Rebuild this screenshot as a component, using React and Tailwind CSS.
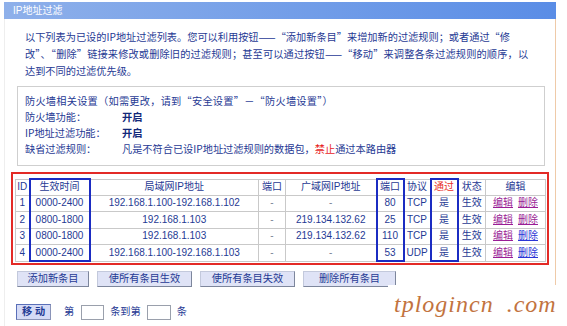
const rows = [
  { id: 1, time: '0000-2400', lan: '192.168.1.100-192.168.1.102', wan: '-', port: '80', proto: 'TCP', delBlue: false },
  { id: 2, time: '0800-1800', lan: '192.168.1.103', wan: '219.134.132.62', port: '25', proto: 'TCP', delBlue: false },
  { id: 3, time: '0800-1800', lan: '192.168.1.103', wan: '219.134.132.62', port: '110', proto: 'TCP', delBlue: true },
  { id: 4, time: '0000-2400', lan: '192.168.1.100-192.168.1.103', wan: '-', port: '53', proto: 'UDP', delBlue: true },
];

const cell = 'border border-[#c9c9c9] p-0 text-center';
const blue = 'border-x-2 border-x-[#1b2cc2]';
const cjk = "font-['Noto_Sans_CJK_SC',sans-serif]";

const Btn = ({ children, w }) => (
  <button
    type="button"
    className={`h-[16px] ${w} border border-[#c3c9dc] border-r-[#7d869c] border-b-[#7d869c] bg-[#dfe3f6] text-[10.2px] leading-[14px] text-[#1f3a94]`}
  >
    {children}
  </button>
);

export default function App() {
  return (
    <div className="relative h-[326px] w-[567px] overflow-hidden bg-white font-['Liberation_Sans','Noto_Sans_CJK_SC',sans-serif] text-[#1f3a94]">
      <div className="ml-[4px] mt-[2px] h-[17px] w-[552px] bg-linear-to-r from-[#8eb0ea] to-[#5a8de6] pl-[9px] text-[10px] leading-[17px] text-white">
        IP地址过滤
      </div>

      <div className="ml-[4px] h-[307px] w-[552px] border-l border-r border-l-[#eeeeee] border-r-[#efcaa8]">
        <div className={`${cjk} pl-[20px] pt-[9px] text-[10.2px] leading-[17px] whitespace-nowrap`}>
          <div>以下列表为已设的IP地址过滤列表。您可以利用按钮——“添加新条目”来增加新的过滤规则；或者通过“修</div>
          <div className="tracking-[0.15px]">改”、“删除”链接来修改或删除旧的过滤规则；甚至可以通过按钮——“移动”来调整各条过滤规则的顺序，以</div>
          <div>达到不同的过滤优先级。</div>
        </div>

        <div className={`${cjk} ml-[12px] mt-[7px] h-[80px] w-[528px] border border-[#cfcfcf] pl-[7px] pt-[6px] text-[10.2px] leading-[16px] whitespace-nowrap`}>
          <div className="tracking-[0.25px]">防火墙相关设置（如需更改，请到“安全设置”－“防火墙设置”）</div>
          <div className="flex">
            <span className="w-[97px]">防火墙功能：</span>
            <span className="font-bold text-[#12287a]">开启</span>
          </div>
          <div className="flex">
            <span className="w-[97px]">IP地址过滤功能：</span>
            <span className="font-bold text-[#12287a]">开启</span>
          </div>
          <div className="flex">
            <span className="w-[97px]">缺省过滤规则：</span>
            <span>
              凡是不符合已设IP地址过滤规则的数据包，<span className="text-[#e8231e]">禁止</span>通过本路由器
            </span>
          </div>
        </div>

        <div className="ml-[6px] mt-[6px] w-[538px] border-2 border-[#e32a26] px-[2px] pb-[1px] pt-[4px]">
          <table className="w-[530px] table-fixed border-collapse text-[10px] leading-none">
            <colgroup>
              <col className="w-[14px]" />
              <col className="w-[60px]" />
              <col className="w-[169px]" />
              <col className="w-[27px]" />
              <col className="w-[91px]" />
              <col className="w-[27px]" />
              <col className="w-[27px]" />
              <col className="w-[27px]" />
              <col className="w-[28px]" />
              <col className="w-[60px]" />
            </colgroup>
            <thead>
              <tr className="h-[16px]">
                <th className={`${cell} font-normal`}>ID</th>
                <th className={`${cell} ${blue} border-t-2 border-t-[#1b2cc2] font-normal`}>生效时间</th>
                <th className={`${cell} font-normal`}>局域网IP地址</th>
                <th className={`${cell} font-normal`}>端口</th>
                <th className={`${cell} font-normal`}>广域网IP地址</th>
                <th className={`${cell} ${blue} border-t-2 border-t-[#1b2cc2] font-normal`}>端口</th>
                <th className={`${cell} font-normal`}>协议</th>
                <th className={`${cell} ${blue} border-t-2 border-t-[#1b2cc2] font-normal text-[#e8302a]`}>通过</th>
                <th className={`${cell} font-normal`}>状态</th>
                <th className={`${cell} font-normal`}>编辑</th>
              </tr>
            </thead>
            <tbody>
              {rows.map((r, i) => {
                const last = i === rows.length - 1 ? 'border-b-2 border-b-[#1b2cc2]' : '';
                return (
                  <tr key={r.id} className="h-[16.5px]">
                    <td className={cell}>{r.id}</td>
                    <td className={`${cell} ${blue} ${last}`}>{r.time}</td>
                    <td className={cell}>{r.lan}</td>
                    <td className={`${cell} text-[#7a8296]`}>-</td>
                    <td className={`${cell} ${r.wan === '-' ? 'text-[#7a8296]' : ''}`}>{r.wan}</td>
                    <td className={`${cell} ${blue} ${last}`}>{r.port}</td>
                    <td className={cell}>{r.proto}</td>
                    <td className={`${cell} ${blue} ${last}`}>是</td>
                    <td className={cell}>生效</td>
                    <td className={cell}>
                      <span className="text-[#9a1d96] underline">编辑</span>
                      <span className={`ml-[5px] underline ${r.delBlue ? 'text-[#2b35d6]' : 'text-[#9a1d96]'}`}>删除</span>
                    </td>
                  </tr>
                );
              })}
            </tbody>
          </table>
        </div>

        <div className="ml-[12px] mt-[6px] flex gap-[8px]">
          <Btn w="w-[72px]">添加新条目</Btn>
          <Btn w="w-[95px]">使所有条目生效</Btn>
          <Btn w="w-[95px]">使所有条目失效</Btn>
          <Btn w="w-[93px]">删除所有条目</Btn>
        </div>

        <div className="ml-[11px] mt-[17px] flex items-center text-[10.2px]">
          <button
            type="button"
            className="h-[16px] w-[35px] border border-[#5a6fb8] border-r-[#8a94b8] border-b-[#8a94b8] bg-[#d5dbf6] text-[10.2px] font-bold leading-[14px] text-[#1f3a94]"
          >
            移 动
          </button>
          <span className="ml-[13px]">第</span>
          <span className="ml-[7px] h-[15px] w-[23px] border border-[#9aa0ac] bg-white" />
          <span className="ml-[6px]">条到第</span>
          <span className="ml-[6px] h-[15px] w-[24px] border border-[#9aa0ac] bg-white" />
          <span className="ml-[6px]">条</span>
        </div>
      </div>

      <div className="absolute left-[388px] top-[285px] h-[41px] w-[179px] whitespace-nowrap bg-white pl-[6px] pt-[4px] font-['Liberation_Serif',serif] text-[24px] italic leading-[30px] tracking-[1px] text-[#c2733f] [word-spacing:6px]">
        tplogincn .com
      </div>
    </div>
  );
}
